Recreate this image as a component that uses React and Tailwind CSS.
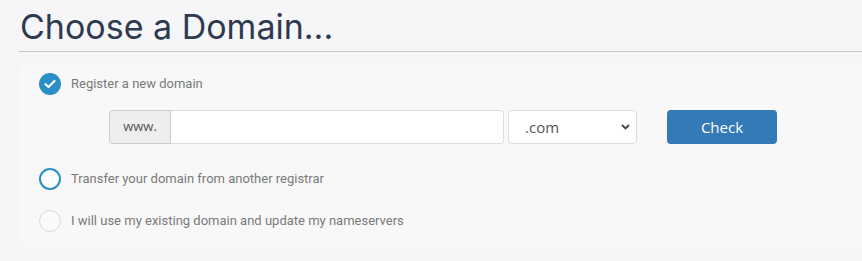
import { useState } from "react";

const options = [
	{ id: "register", label: "Register a new domain" },
	{ id: "transfer", label: "Transfer your domain from another registrar" },
	{ id: "owndomain", label: "I will use my existing domain and update my nameservers" }
];

function Radio({ state }) {
	if (state === "checked") {
		return (
			<span className="flex h-[22px] w-[22px] items-center justify-center rounded-full bg-[#2b8fc7]">
				<svg width="12" height="10" viewBox="0 0 12 10" fill="none">
					<path d="M1.5 5.2 4.5 8 10.5 2" stroke="#fff" strokeWidth="2.2" strokeLinecap="round" strokeLinejoin="round" />
				</svg>
			</span>
		);
	}
	if (state === "focus") {
		return <span className="block h-[22px] w-[22px] rounded-full border-2 border-[#2b8fc7] bg-white" />;
	}
	return <span className="block h-[22px] w-[22px] rounded-full border border-[#d8d8d8] bg-[#fafafa]" />;
}

export default function App() {
	const [tld, setTld] = useState(".com");

	return (
		<div className="min-h-[261px] bg-[#f6f6f8] pt-[4px]" style={{ fontFamily: "Roboto, sans-serif" }}>
			<div className="px-[20px]">
				<h1 className="text-[34px] leading-[46px] text-[#2d3a50]" style={{ fontFamily: "Inter, sans-serif" }}>
					Choose a Domain...
				</h1>
			</div>
			<div className="ml-[19px] mt-[1px] border-t border-[#c8c8ca]" />

			<div className="ml-[20px] mt-[10px] w-[842px] rounded-l-md bg-[#f8f8f8] pb-[14px] pt-[11px]">
				<label className="flex items-center gap-[10px] pl-[19px]">
					<Radio state="checked" />
					<span className="text-[13px] text-[#7a7a7a]">{options[0].label}</span>
				</label>

				<div className="mt-[15px] flex items-center pl-[89px]">
					<span className="flex h-[34px] w-[62px] items-center justify-center rounded-l border border-[#cccccc] bg-[#eeeeee] text-[13px] text-[#555]" style={{ fontFamily: "'Open Sans', sans-serif" }}>
						www.
					</span>
					<input className="h-[34px] w-[333px] rounded-r border border-l-0 border-[#dddddd] bg-white px-3 text-[14px] outline-none" />
					<div className="relative ml-[4px]">
						<select
							value={tld}
							onChange={e => setTld(e.target.value)}
							className="h-[34px] w-[129px] appearance-none rounded border border-[#dddddd] bg-white pl-[16px] text-[15px] text-[#555] outline-none"
							style={{ fontFamily: "'Open Sans', sans-serif" }}
						>
							<option>.com</option>
							<option>.net</option>
							<option>.org</option>
						</select>
						<svg className="pointer-events-none absolute right-[7px] top-[14px]" width="9" height="6" viewBox="0 0 9 6">
							<path d="M1 1 4.5 4.5 8 1" stroke="#444" strokeWidth="1.8" fill="none" />
						</svg>
					</div>
					<button className="ml-[30px] h-[34px] w-[110px] rounded bg-[#337ab7] text-[15px] text-white" style={{ fontFamily: "'Open Sans', sans-serif" }}>
						Check
					</button>
				</div>

				<label className="mt-[24px] flex items-center gap-[10px] pl-[19px]">
					<Radio state="focus" />
					<span className="text-[13px] text-[#7a7a7a]">{options[1].label}</span>
				</label>
				<label className="mt-[20px] flex items-center gap-[10px] pl-[19px]">
					<Radio />
					<span className="text-[13px] text-[#7a7a7a]">{options[2].label}</span>
				</label>
			</div>
		</div>
	);
}
